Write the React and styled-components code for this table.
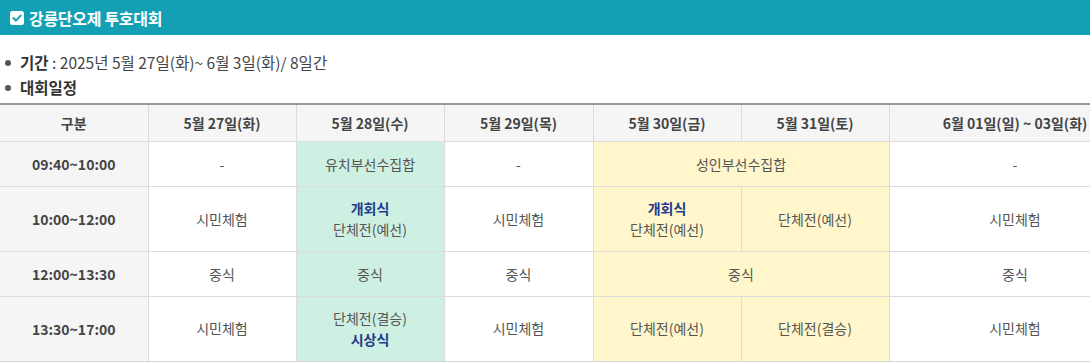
import React from "react";
import styled, { createGlobalStyle } from "styled-components";

const GlobalStyle = createGlobalStyle`
  html, body {
    margin: 0;
    padding: 0;
    overflow: hidden;
    background: #fff;
  }
  body {
    font-family: "Noto Sans CJK KR", "Noto Sans", sans-serif;
    font-size: 14px;
    color: #555;
  }
`;

const colWidths = [148, 148, 148, 149, 148, 148, 252];

const schedule = [
  {
    time: "09:40~10:00",
    cells: [
      { text: "-" },
      { text: "유치부선수집합", tone: "green" },
      { text: "-" },
      { text: "성인부선수집합", tone: "yellow", span: 2 },
      { text: "-" },
    ],
    tall: false,
  },
  {
    time: "10:00~12:00",
    cells: [
      { text: "시민체험" },
      { strong: "개회식", text: "단체전(예선)", tone: "green" },
      { text: "시민체험" },
      { strong: "개회식", text: "단체전(예선)", tone: "yellow" },
      { text: "단체전(예선)", tone: "yellow" },
      { text: "시민체험" },
    ],
    tall: true,
  },
  {
    time: "12:00~13:30",
    cells: [
      { text: "중식" },
      { text: "중식", tone: "green" },
      { text: "중식" },
      { text: "중식", tone: "yellow", span: 2 },
      { text: "중식" },
    ],
    tall: false,
  },
  {
    time: "13:30~17:00",
    cells: [
      { text: "시민체험" },
      { text: "단체전(결승)", strongAfter: "시상식", tone: "green" },
      { text: "시민체험" },
      { text: "단체전(예선)", tone: "yellow" },
      { text: "단체전(결승)", tone: "yellow" },
      { text: "시민체험" },
    ],
    tall: true,
  },
];

const days = [
  "5월 27일(화)",
  "5월 28일(수)",
  "5월 29일(목)",
  "5월 30일(금)",
  "5월 31일(토)",
  "6월 01일(일) ~ 03일(화)",
];

const CheckIcon = () => (
  <svg width="14" height="14" viewBox="0 0 14 14">
    <rect x="0" y="0" width="14" height="14" rx="2.5" fill="#fff" />
    <path
      d="M3.4 7.1 L5.9 9.6 L10.6 4.6"
      fill="none"
      stroke="#14a0b4"
      strokeWidth="2.1"
      strokeLinecap="round"
      strokeLinejoin="round"
    />
  </svg>
);

export default function App() {
  return (
    <>
      <GlobalStyle />
      <Page>
        <TitleBar>
          <CheckIcon />
          <h2>강릉단오제 투호대회</h2>
        </TitleBar>

        <InfoList>
          <li>
            <b>기간</b> : 2025년 5월 27일(화)~ 6월 3일(화)/ 8일간
          </li>
          <li>
            <b>대회일정</b>
          </li>
        </InfoList>

        <Table>
          <colgroup>
            {colWidths.map((w, i) => (
              <Col key={i} $w={w} />
            ))}
          </colgroup>
          <thead>
            <tr>
              <HeadCell>구분</HeadCell>
              {days.map((d) => (
                <HeadCell key={d}>{d}</HeadCell>
              ))}
            </tr>
          </thead>
          <tbody>
            {schedule.map((row) => (
              <Row key={row.time} $tall={row.tall}>
                <TimeCell>{row.time}</TimeCell>
                {row.cells.map((c, i) => (
                  <Cell key={i} $tone={c.tone} colSpan={c.span || 1}>
                    {c.strong && <Strong>{c.strong}</Strong>}
                    {c.text}
                    {c.strongAfter && <Strong>{c.strongAfter}</Strong>}
                  </Cell>
                ))}
              </Row>
            ))}
          </tbody>
        </Table>
      </Page>
    </>
  );
}

const Page = styled.div`
  width: 1090px;
`;

const TitleBar = styled.div`
  height: 35px;
  background: #14a0b4;
  display: flex;
  align-items: center;
  gap: 5px;
  padding-left: 10px;

  h2 {
    margin: 0;
    font-size: 16px;
    font-weight: 700;
    color: #fff;
    letter-spacing: -0.3px;
  }
`;

const InfoList = styled.ul`
  margin: 15px 0 0;
  padding: 0 0 0 20px;
  list-style: none;

  li {
    position: relative;
    font-size: 15.5px;
    line-height: 25px;
    color: #444;
  }

  li::before {
    content: "";
    position: absolute;
    left: -15px;
    top: 10px;
    width: 6px;
    height: 6px;
    border-radius: 50%;
    background: #555;
  }

  b {
    color: #333;
    font-weight: 700;
  }
`;

const Table = styled.table`
  margin-top: 3px;
  width: 1141px;
  table-layout: fixed;
  border-collapse: collapse;
  border-top: 2px solid #9a9a9a;
  border-bottom: 2px solid #d6d6d6;
`;

const Col = styled.col`
  width: ${(p) => p.$w}px;
`;

const HeadCell = styled.th`
  height: 36px;
  padding: 0;
  background: #f5f5f5;
  border: 1px solid #dcdcdc;
  border-top: none;
  font-size: 14px;
  font-weight: 700;
  color: #444;
  text-align: center;

  &:first-child {
    border-left: none;
  }
`;

const Row = styled.tr`
  height: ${(p) => (p.$tall ? "65px" : "45px")};
`;

const TimeCell = styled.td`
  background: #f5f5f5;
  border: 1px solid #dcdcdc;
  border-left: none;
  font-weight: 700;
  color: #444;
  text-align: center;
  padding: 0;
`;

const toneColors = {
  green: "#cdf0e2",
  yellow: "#fff6cc",
};

const Cell = styled.td`
  background: ${(p) => toneColors[p.$tone] || "#fff"};
  border: 1px solid #dcdcdc;
  text-align: center;
  line-height: 21px;
  color: #555;
  padding: 0;
`;

const Strong = styled.div`
  font-weight: 700;
  color: #1f3c8c;
`;
